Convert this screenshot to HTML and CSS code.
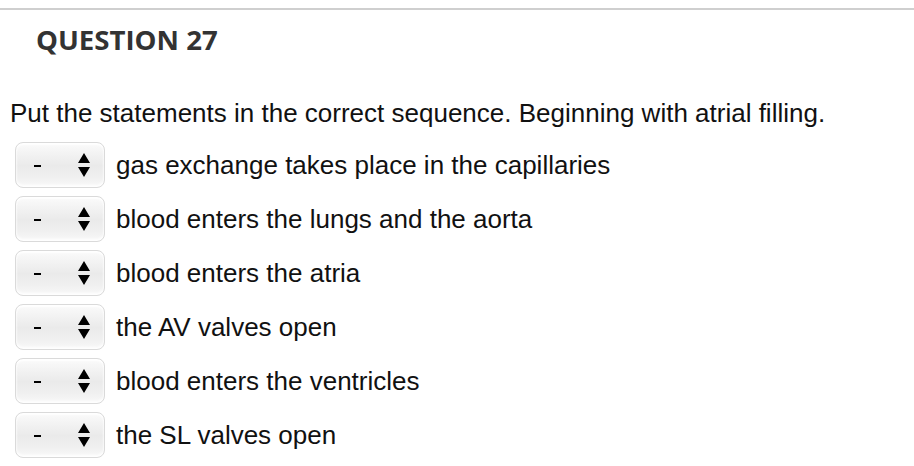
FILE: index.html
```html
<!DOCTYPE html>
<html>
<head>
<meta charset="utf-8">
<link rel="stylesheet" href="styles.css">
</head>
<body>
<div class="page">
  <div class="rule"></div>
  <h2 class="title">QUESTION 27</h2>
  <p class="prompt">Put the statements in the correct sequence. Beginning with atrial filling.</p>
  <ul class="items">
    <li class="item"><span class="sel"><span class="dash"></span><svg class="arr" width="12" height="24" viewBox="0 0 12 24"><path d="M6 0 L12 10 H0 Z M6 24 L12 14 H0 Z" fill="#000"/></svg></span><span class="txt">gas exchange takes place in the capillaries</span></li>
    <li class="item"><span class="sel"><span class="dash"></span><svg class="arr" width="12" height="24" viewBox="0 0 12 24"><path d="M6 0 L12 10 H0 Z M6 24 L12 14 H0 Z" fill="#000"/></svg></span><span class="txt">blood enters the lungs and the aorta</span></li>
    <li class="item"><span class="sel"><span class="dash"></span><svg class="arr" width="12" height="24" viewBox="0 0 12 24"><path d="M6 0 L12 10 H0 Z M6 24 L12 14 H0 Z" fill="#000"/></svg></span><span class="txt">blood enters the atria</span></li>
    <li class="item"><span class="sel"><span class="dash"></span><svg class="arr" width="12" height="24" viewBox="0 0 12 24"><path d="M6 0 L12 10 H0 Z M6 24 L12 14 H0 Z" fill="#000"/></svg></span><span class="txt">the AV valves open</span></li>
    <li class="item"><span class="sel"><span class="dash"></span><svg class="arr" width="12" height="24" viewBox="0 0 12 24"><path d="M6 0 L12 10 H0 Z M6 24 L12 14 H0 Z" fill="#000"/></svg></span><span class="txt">blood enters the ventricles</span></li>
    <li class="item"><span class="sel"><span class="dash"></span><svg class="arr" width="12" height="24" viewBox="0 0 12 24"><path d="M6 0 L12 10 H0 Z M6 24 L12 14 H0 Z" fill="#000"/></svg></span><span class="txt">the SL valves open</span></li>
  </ul>
</div>
</body>
</html>
```
FILE: styles.css
```css
html, body {
  margin: 0;
  padding: 0;
  background: #fff;
}
.page {
  padding-top: 8px;
}
.rule {
  height: 2px;
  background: #cfcfcf;
}
.title {
  margin: 0;
  padding: 10px 0 0 36px;
  font-family: "Open Sans", sans-serif;
  font-weight: 700;
  font-size: 27.6px;
  line-height: 38px;
  color: #333;
}
.prompt {
  margin: 0;
  padding: 40px 0 0 10px;
  font-family: "Liberation Sans", Arial, sans-serif;
  font-size: 26px;
  line-height: 30px;
  color: #111;
}
.items {
  list-style: none;
  margin: 0;
  padding: 14px 0 0 15px;
  display: flex;
  flex-direction: column;
  gap: 8px;
}
.item {
  display: flex;
  align-items: center;
  gap: 11px;
  height: 46px;
}
.sel {
  box-sizing: border-box;
  flex: none;
  width: 90px;
  height: 46px;
  border: 1px solid #dadada;
  border-radius: 8px;
  background: linear-gradient(#fbfbfb 0%, #f1f1f1 30%, #eaeaea 52%, #efefef 75%, #f8f8f8 100%);
  box-shadow: inset 0 -2px 3px rgba(255,255,255,0.95), inset 0 2px 2px rgba(255,255,255,1);
  display: flex;
  align-items: center;
  justify-content: space-between;
  padding: 0 14px 0 18px;
}
.dash {
  display: block;
  width: 7px;
  height: 2px;
  background: #000;
  margin-top: 2px;
}
.arr {
  display: block;
}
.txt {
  font-family: "Liberation Sans", Arial, sans-serif;
  font-size: 26px;
  color: #111;
}
```
